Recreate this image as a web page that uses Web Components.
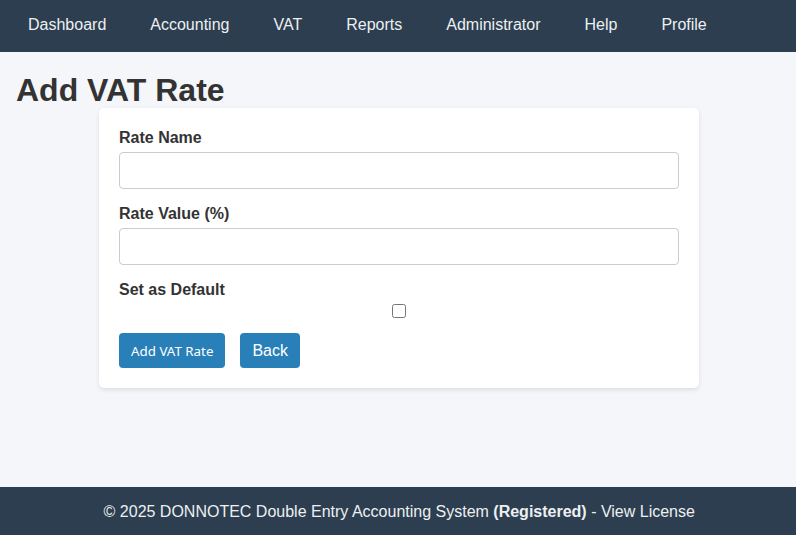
<!DOCTYPE html>
<html lang="en">
<head>
<meta charset="utf-8">
<title>Add VAT Rate</title>
<style>
html, body { margin: 0; height: 100%; }
body {
  display: flex;
  flex-direction: column;
  min-height: 535px;
  background: #f4f6f9;
  color: #333;
  font-family: "Liberation Sans", Arial, sans-serif;
  font-size: 16px;
}
</style>
</head>
<body>
<app-nav>
  <a href="#">Dashboard</a>
  <a href="#">Accounting</a>
  <a href="#">VAT</a>
  <a href="#">Reports</a>
  <a href="#">Administrator</a>
  <a href="#">Help</a>
  <a href="#">Profile</a>
</app-nav>
<app-page heading="Add VAT Rate">
  <vat-form></vat-form>
</app-page>
<app-footer>© 2025 DONNOTEC Double Entry Accounting System <b>(Registered)</b> - View License</app-footer>

<script>
const navTemplate = document.createElement('template');
navTemplate.innerHTML = `
<style>
:host {
  display: flex;
  box-sizing: border-box;
  height: 52px;
  padding: 0 0 2px 6px;
  align-items: center;
  background: #2c3e50;
}
::slotted(a) {
  padding: 0 22px;
  color: #ecf0f1;
  text-decoration: none;
  line-height: 50px;
}
</style>
<slot></slot>`;

class AppNav extends HTMLElement {
  constructor() {
    super();
    this.attachShadow({ mode: 'open' }).appendChild(navTemplate.content.cloneNode(true));
  }
}

const pageTemplate = document.createElement('template');
pageTemplate.innerHTML = `
<style>
:host {
  display: block;
  flex: 1;
  padding-left: 2px;
}
h1 {
  margin: 0;
  padding: 20px 14px 0;
  font-size: 32px;
  line-height: 36px;
  font-weight: bold;
}
</style>
<h1></h1>
<slot></slot>`;

class AppPage extends HTMLElement {
  constructor() {
    super();
    this.root = this.attachShadow({ mode: 'open' });
    this.root.appendChild(pageTemplate.content.cloneNode(true));
  }

  connectedCallback() {
    this.root.querySelector('h1').textContent = this.getAttribute('heading');
  }
}

const formTemplate = document.createElement('template');
formTemplate.innerHTML = `
<style>
:host {
  display: block;
  box-sizing: border-box;
  width: 600px;
  margin: 0 auto;
  padding: 20px;
  background: #fff;
  border-radius: 5px;
  box-shadow: 0 2px 4px rgba(0, 0, 0, 0.1);
}
label {
  display: block;
  margin-bottom: 5px;
  font-weight: bold;
  line-height: 19px;
}
.field {
  margin-bottom: 15px;
}
input[type=text] {
  display: block;
  box-sizing: border-box;
  width: 100%;
  height: 37px;
  padding: 8px;
  background: #fff;
  border: 1px solid #ccc;
  border-radius: 4px;
  font: inherit;
}
input[type=checkbox] {
  display: block;
  width: 14px;
  height: 14px;
  margin: 0 auto;
}
.actions {
  display: flex;
  align-items: stretch;
  gap: 15px;
}
.btn {
  display: block;
  box-sizing: border-box;
  height: 35px;
  padding: 0 12px;
  background: #2980b9;
  color: #fff;
  border: 0;
  border-radius: 4px;
  font-family: "Liberation Sans", Arial, sans-serif;
  font-size: 16px;
  line-height: 35px;
  text-decoration: none;
}
button.btn {
  padding: 1px 12px 0;
  font-family: "Noto Sans", sans-serif;
  font-size: 13.33px;
}
</style>
<form>
  <div class="field">
    <label for="name">Rate Name</label>
    <input id="name" type="text">
  </div>
  <div class="field">
    <label for="value">Rate Value (%)</label>
    <input id="value" type="text">
  </div>
  <div class="field">
    <label for="def">Set as Default</label>
    <input id="def" type="checkbox">
  </div>
  <div class="actions">
    <button class="btn" type="button">Add VAT Rate</button>
    <a class="btn" href="#">Back</a>
  </div>
</form>`;

class VatForm extends HTMLElement {
  constructor() {
    super();
    this.attachShadow({ mode: 'open' }).appendChild(formTemplate.content.cloneNode(true));
  }
}

const footerTemplate = document.createElement('template');
footerTemplate.innerHTML = `
<style>
:host {
  display: block;
  box-sizing: border-box;
  height: 48px;
  padding: 2px 0 0 2.5px;
  background: #2c3e50;
  color: #ecf0f1;
  text-align: center;
  line-height: 46px;
}
</style>
<slot></slot>`;

class AppFooter extends HTMLElement {
  constructor() {
    super();
    this.attachShadow({ mode: 'open' }).appendChild(footerTemplate.content.cloneNode(true));
  }
}

customElements.define('app-nav', AppNav);
customElements.define('app-page', AppPage);
customElements.define('vat-form', VatForm);
customElements.define('app-footer', AppFooter);
</script>
</body>
</html>
